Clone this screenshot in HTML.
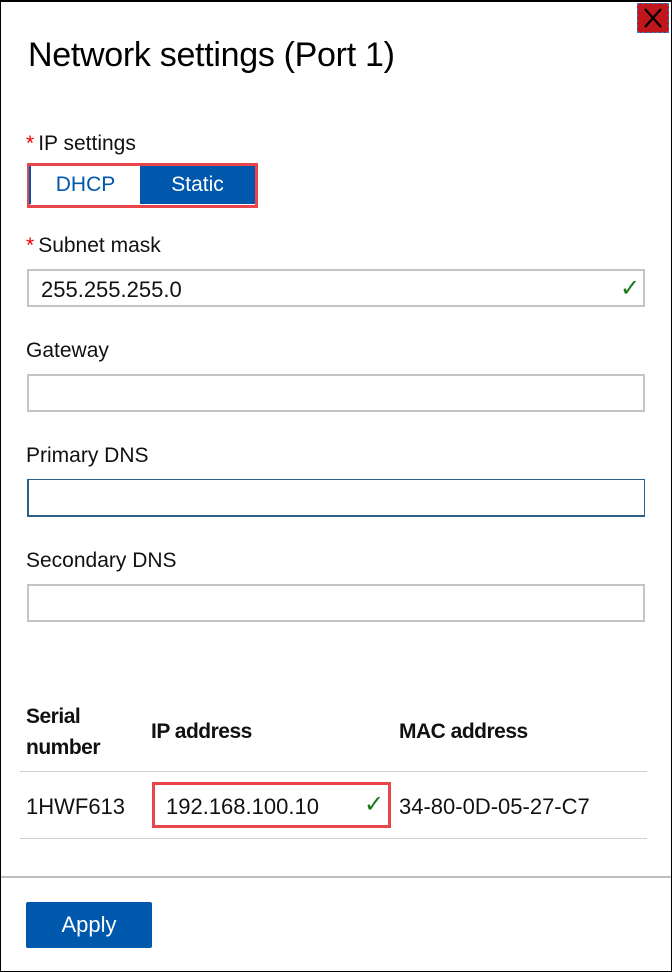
<!DOCTYPE html>
<html><head><style>
*{margin:0;padding:0;box-sizing:border-box}
body{width:672px;height:972px;position:relative;background:#fff;font-family:"Liberation Sans",sans-serif;color:#111;overflow:hidden}
.frame{position:absolute;left:0;top:0;width:672px;height:972px;border:1px solid #000;border-top-width:2px}
.a{position:absolute;white-space:nowrap}
.lbl{font-size:21px;line-height:24px}
.req{color:#e00;margin-right:4px}
.inp{position:absolute;left:27px;width:618px;height:38px;border:2px solid #c4c4c4;background:#fff}
.chk{position:absolute;color:#1a7a1a;font-size:24px}
.t{font-size:22px;line-height:24px}
</style></head><body>
<div class="frame"></div>
<div class="a" style="left:637px;top:3px;width:32px;height:30px;background:#c0161c;border:1px dashed #2a7fd0"></div>
<svg class="a" style="left:641px;top:6px" width="24" height="24" viewBox="0 0 24 24"><path d="M4 3L20 21M20 3L4 21" stroke="#000" stroke-width="2.2"/></svg>
<div class="a" style="left:28px;top:34px;font-size:34px;line-height:42px;color:#000;letter-spacing:-0.3px">Network settings (Port 1)</div>
<div class="a lbl" style="left:26px;top:132px"><span class="req">*</span>IP settings</div>
<div class="a" style="left:27px;top:163px;width:231px;height:45px;border:3px solid #e8464b"></div>
<div class="a" style="left:29px;top:166px;width:2px;height:38px;background:#0058ad"></div>
<div class="a" style="left:31px;top:166px;width:109px;height:38px;color:#0058ad;font-size:21px;line-height:38px;text-align:center">DHCP</div>
<div class="a" style="left:140px;top:166px;width:115px;height:38px;background:#0058ad;color:#fff;font-size:21px;line-height:38px;text-align:center">Static</div>
<div class="a lbl" style="left:26px;top:234px"><span class="req">*</span>Subnet mask</div>
<div class="inp" style="top:269px"></div>
<div class="a t" style="left:41px;top:278px">255.255.255.0</div>
<div class="chk" style="left:620px;top:274px">✓</div>
<div class="a lbl" style="left:26px;top:339px">Gateway</div>
<div class="inp" style="top:374px"></div>
<div class="a lbl" style="left:26px;top:444px">Primary DNS</div>
<div class="inp" style="top:479px;border-color:#2d5f8a;border-width:1px 1px 2px 2px"></div>
<div class="a lbl" style="left:26px;top:549px">Secondary DNS</div>
<div class="inp" style="top:584px"></div>
<div class="a" style="left:26px;top:701px;font-size:21px;line-height:31px;font-weight:bold;letter-spacing:-0.5px">Serial<br>number</div>
<div class="a" style="left:151px;top:720px;font-size:21px;line-height:24px;font-weight:bold;letter-spacing:-0.5px">IP address</div>
<div class="a" style="left:399px;top:720px;font-size:21px;line-height:24px;font-weight:bold;letter-spacing:-0.5px">MAC address</div>
<div class="a" style="left:20px;top:771px;width:627px;height:1px;background:#d0d0d0"></div>
<div class="a t" style="left:26px;top:795px">1HWF613</div>
<div class="a" style="left:152px;top:782px;width:239px;height:46px;border:3px solid #e8464b"></div>
<div class="a t" style="left:166px;top:795px">192.168.100.10</div>
<div class="chk" style="left:364px;top:790px">✓</div>
<div class="a t" style="left:399px;top:795px">34-80-0D-05-27-C7</div>
<div class="a" style="left:20px;top:838px;width:627px;height:1px;background:#d0d0d0"></div>
<div class="a" style="left:1px;top:876px;width:670px;height:2px;background:#bdbdbd"></div>
<div class="a" style="left:26px;top:902px;width:126px;height:46px;background:#0058ad;border-radius:2px;color:#fff;font-size:22px;line-height:46px;text-align:center">Apply</div>
</body></html>
